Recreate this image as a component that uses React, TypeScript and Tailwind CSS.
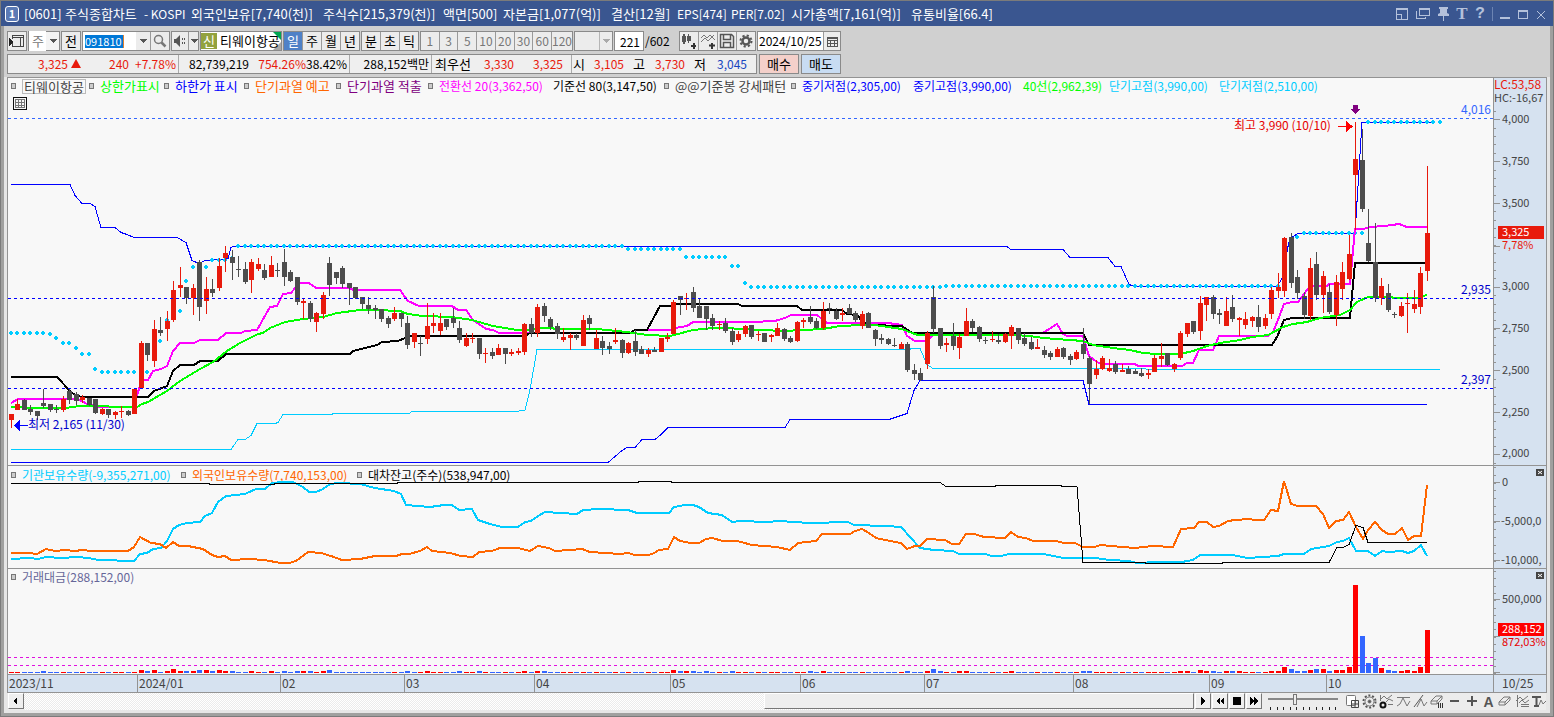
import type { ReactNode } from "react";

// one entry per trading day: direction, high, body top, body bottom, low (plot coordinates)
const CANDLES = `
r414,414,420,428 r399,404,410,410 g399,400,410,410 g405,409,412,415 g411,411,416,420 g389,403,406,408 g404,404,410,412 g405,409,410,413 r396,399,410,412 g388,391,400,404
g392,394,401,405 r395,397,400,403 g398,398,405,406 g399,399,413,414 r408,409,414,415 g409,409,415,418 r411,412,415,419 r406,411,412,418 g410,411,415,416 r389,389,414,414
r341,343,388,389 g343,343,355,361 r320,329,361,367 g317,330,333,336 r311,321,329,341 r281,290,320,322 r267,285,288,297 g287,287,298,304 r284,288,298,315 g260,262,307,321
r277,289,301,314 g279,289,293,297 r258,266,288,291 r246,253,258,272 g250,257,263,280 g256,269,270,277 g262,269,282,284 r259,262,280,293 r258,264,269,271 g264,270,278,280
r256,265,277,277 g263,270,271,277 g249,262,277,286 g270,272,281,282 g277,277,302,305 r299,301,303,319 g301,303,319,322 r312,313,322,332 r292,295,314,319 g257,263,285,296
g272,272,278,284 g266,268,284,288 g283,283,288,305 g287,287,298,299 g297,297,304,309 g297,305,309,314 g305,308,310,319 g309,309,319,322 g316,318,324,328 r307,313,319,321
g313,313,319,327 g316,323,345,349 r333,333,342,348 g336,343,344,356 r303,326,339,344 r313,323,326,333 r313,323,331,335 g319,319,327,330 g308,318,323,328 g321,328,340,343
r333,338,346,347 r333,338,339,343 g338,338,354,359 r348,353,354,363 g348,352,356,359 r344,348,355,355 g348,348,354,364 r349,352,354,356 r348,351,353,355 r323,324,352,355
g318,324,333,337 r304,307,333,337 g303,306,316,322 g317,319,327,330 g323,326,334,339 r328,337,340,342 r333,335,338,350 g333,335,338,340 r315,320,346,346 g315,318,324,330
r330,338,349,349 g336,341,348,355 g342,346,349,354 r328,340,342,344 g339,340,353,358 r342,343,353,354 g330,341,352,356 g346,349,354,354 r348,350,354,357 g347,350,352,352
r338,338,352,352 r333,337,339,342 r300,302,334,334 g296,296,300,315 r293,298,299,310 g287,292,308,312 g298,306,318,318 g306,306,319,330 g314,318,326,330 r321,324,325,330
g318,323,331,333 g328,331,342,345 r331,334,340,342 r325,326,334,337 g325,325,337,339 r331,334,335,341 g333,333,342,342 r334,335,337,342 r323,328,336,336 g328,329,339,341
g336,338,342,343 r321,322,341,342 r318,320,322,328 g306,317,322,324 g318,321,328,329 r302,311,328,330 g303,308,309,314 g308,311,319,320 r308,313,315,321 g304,308,314,314
g311,313,320,322 r311,314,326,329 g312,313,328,328 g329,330,339,346 g334,338,340,344 g338,339,344,345 g338,345,346,347 r342,344,349,349 g342,344,370,372 g364,370,374,380
g368,373,380,381 r331,333,364,369 g286,297,329,333 g328,328,346,349 r338,343,345,352 g323,336,346,350 r334,337,348,359 r308,321,336,336 g319,321,328,332 g326,327,339,342
g337,340,341,344 r331,339,340,342 g334,340,342,344 r333,334,342,343 r325,327,336,349 g328,328,340,344 g333,338,344,346 g337,342,349,350 r339,347,349,349 g346,350,355,358
g351,353,357,360 r347,349,357,357 g347,348,357,359 g354,356,360,365 r350,352,359,360 g328,344,354,359 g356,358,384,404 r360,369,375,379 r356,358,369,370 r359,368,371,372
g361,364,372,374 r364,370,372,372 g366,369,374,374 g369,371,374,374 g368,373,376,377 r369,373,375,379 r355,358,372,372 r343,356,359,367 g353,353,365,366 r363,364,369,372
r331,333,358,360 r323,323,334,337 g321,321,332,334 r296,303,331,340 r297,297,305,321 g295,297,314,319 g309,313,315,324 r297,311,326,326 g295,307,319,322 r317,318,320,336
r312,319,325,329 r316,317,321,327 g305,317,327,332 r314,318,326,329 r287,290,314,319 r273,287,291,298 r237,238,291,297 g233,237,283,288 g270,277,293,299 g292,296,315,319
r258,268,316,320 g252,264,295,300 r271,276,295,313 g284,292,312,314 r275,282,315,326 r262,272,289,300 r235,254,279,280 r122,159,175,230 g129,160,209,212 g209,243,261,262
g223,262,298,302 r278,286,298,305 g284,293,310,312 g312,314,315,318 r302,306,316,317 r293,303,304,333 r290,304,309,313 r267,273,307,314 r166,233,271,281
`.trim().split(/\s+/).map((s) => ({ up: s[0] === "r", v: s.slice(1).split(",").map(Number) }));

// trading value bars: colour and height
const VOLUMES = (
  "r r b b b b2 b b r b b r b b r b r r b r r3 b2 r3 b r2 r4 r2 b2 r2 b3 r3 b2 r3 r2 b2 b b r2 r b " +
  "r2 b b2 b b2 r2 b2 r r2 b3 b b b b b b b b b r b b2 b r r2 r r b b b2 r r b2 r b b r b r r2 " +
  "b r2 b2 b b r r b r b r b b r b r b b r b r r r3 b2 r2 b2 b b2 b r b b2 r r b r b r r b " +
  "b r r b2 b r2 b b r b b r b b b b b r b2 b b r2 b4 b2 r b r2 r2 b b b r b r r2 b b b r b " +
  "b r b b r b2 b2 r r r b r b r b r r r b r r2 r2 b r3 r2 b2 b r2 b2 r2 r r b r r2 r2 r6 b4 b2 b2 " +
  "r3 b4 r4 b2 r3 r3 r6 r88 b37 b10 b15 r5 b3 b2 r2 r3 r2 r6 r43"
).split(" ").map((s) => ({ up: s[0] === "r", h: Number(s.slice(1) || 1) }));

// short-term high dots as [first day, last day, y]
const DOTS = [
  [0, 5, 333], [6, 6, 334], [7, 7, 338], [8, 9, 343], [10, 10, 348], [11, 12, 354], [13, 13, 369], [14, 21, 372],
  [23, 23, 341], [24, 24, 320], [26, 26, 311], [27, 27, 281], [28, 28, 267], [30, 30, 267], [31, 33, 260], [34, 34, 258],
  [35, 94, 246], [95, 103, 249], [104, 110, 257], [111, 112, 266], [113, 113, 283], [114, 143, 287], [144, 195, 286],
  [198, 198, 237], [199, 208, 233], [209, 220, 122],
];

const LINES = {
  midHigh:
    "11,184 70,184 75,195 82,203 90,203 95,206 101,227 115,227 121,232 127,234 134,237 177,237 186,242 192,260 199,263 205,260 222,259 228,258 231,247 233,246 1007,246 1011,249 1063,249 1070,257 1108,257 1115,266 1121,266 1129,284 1135,286 1277,286 1282,278 1288,246 1290,238 1298,233 1355,233 1362,122 1434,122",
  midLow:
    "11,462 608,462 622,450 627,447 635,447 642,439 655,439 661,434 668,427 785,427 790,419 889,419 907,413 914,390 920,380 1083,380 1089,404 1427,404",
  shortLow:
    "11,449 231,449 238,439 245,439 251,435 257,423 275,423 278,422 283,414 332,414 333,413 409,413 412,411 513,411 525,410 530,389 537,349 910,349 911,348 920,348 927,364 933,368 1145,368 1147,369 1440,369",
  conversion:
    "11,403 18,399 78,399 87,404 100,407 133,407 138,392 142,380 148,380 153,371 161,369 167,366 173,351 180,343 194,343 200,340 218,340 226,333 241,333 245,331 257,330 270,307 277,306 283,294 291,293 299,283 309,283 316,288 350,288 353,290 400,290 408,301 419,306 452,306 458,310 466,310 473,320 486,329 493,330 499,333 630,333 635,330 670,330 675,328 687,326 693,322 752,322 775,321 785,318 791,315 817,315 827,323 888,323 895,324 902,325 907,336 915,341 927,341 932,336 934,333 1042,333 1046,331 1057,324 1063,334 1067,336 1083,336 1089,356 1097,362 1102,364 1135,364 1138,366 1182,366 1187,363 1193,363 1199,350 1213,350 1219,336 1268,336 1273,332 1278,320 1284,304 1292,302 1298,302 1304,294 1310,286 1327,286 1329,284 1350,284 1355,229 1363,229 1370,227 1385,226 1399,224 1407,227 1427,227",
  base:
    "11,377 57,377 70,391 75,395 82,397 148,397 154,391 167,386 173,371 180,365 194,365 200,361 218,361 226,354 350,354 353,351 377,345 382,342 398,341 405,338 410,336 525,336 530,333 630,333 635,330 647,330 660,306 670,306 675,304 738,304 742,306 797,306 802,310 842,310 847,314 857,315 862,321 870,325 902,326 912,333 1083,333 1089,345 1272,345 1277,337 1284,320 1292,318 1350,318 1355,263 1427,263",
  ma40:
    "11,407 37,408 65,408 80,406 137,407 142,404 148,402 167,391 180,381 200,369 213,362 227,351 240,343 258,334 263,333 270,328 285,322 303,319 323,317 337,313 360,310 375,310 400,311 408,314 423,316 452,317 472,320 493,326 517,330 527,330 538,328 550,328 557,329 597,329 607,330 627,332 647,335 670,336 678,334 693,330 713,328 725,328 743,329 783,331 803,330 823,329 840,326 863,325 875,325 888,327 902,329 912,333 918,335 960,335 1013,335 1030,336 1043,338 1083,341 1093,345 1113,348 1130,350 1143,353 1157,354 1180,354 1193,351 1207,346 1220,343 1240,340 1252,337 1268,335 1283,327 1293,324 1307,322 1320,318 1340,315 1350,310 1357,302 1368,297 1388,297 1397,298 1418,298 1423,296 1427,295",
  lending:
    "11,483 209,483 210,484 274,484 275,483 397,483 398,482 638,482 639,481 671,481 672,482 940,482 946,486 995,486 996,485 1061,485 1062,486 1077,486 1083,562 1145,562 1146,563 1222,563 1223,562 1329,562 1337,547 1343,547 1349,544 1356,525 1363,527 1368,542 1427,542",
  institution:
    "11,559 29,558 38,559 46,557 61,558 77,557 88,558 99,560 134,561 140,554 147,553 153,549 161,548 167,541 173,529 179,525 187,523 200,522 205,516 212,513 218,502 226,496 245,494 256,489 265,489 272,483 283,482 293,482 303,487 309,492 316,492 323,489 330,484 339,483 360,484 375,488 394,491 401,494 406,505 430,507 444,505 452,505 459,510 472,509 478,520 490,524 502,527 518,527 525,522 531,521 538,516 545,512 577,514 583,510 599,509 628,510 637,513 669,513 674,507 685,505 693,505 699,507 708,513 722,515 732,522 741,521 767,522 779,521 810,523 848,522 854,525 886,526 901,527 911,538 920,548 934,550 953,551 959,554 986,554 991,556 1001,556 1009,554 1043,554 1064,558 1095,558 1110,560 1129,561 1137,563 1144,563 1150,562 1182,562 1187,561 1193,560 1200,555 1233,555 1237,556 1248,558 1278,556 1284,554 1304,554 1311,549 1329,546 1337,542 1343,541 1349,538 1356,551 1368,551 1375,556 1382,551 1388,552 1402,551 1408,553 1414,551 1421,545 1427,556",
  foreign:
    "11,553 29,553 37,554 46,549 55,551 65,550 75,551 82,550 92,551 128,551 134,547 140,537 151,543 160,544 166,548 173,542 179,546 188,546 203,549 212,555 218,557 225,556 231,560 249,559 264,560 281,563 289,563 296,561 308,552 321,553 331,556 342,560 360,559 375,556 396,556 402,554 409,554 420,551 427,547 432,551 450,553 461,556 473,557 479,552 492,551 500,548 518,548 530,551 538,546 549,548 555,551 570,550 582,549 590,552 620,554 628,553 635,555 649,555 654,553 659,550 668,549 674,537 680,541 691,543 699,543 706,539 712,538 723,541 737,541 752,545 777,547 790,550 798,543 816,541 822,534 850,534 855,531 862,529 869,533 876,538 890,541 901,543 907,549 915,546 920,546 927,539 945,540 952,544 959,544 966,534 974,534 984,537 1005,538 1011,532 1018,537 1026,538 1033,541 1056,541 1064,543 1075,543 1083,547 1095,547 1100,545 1123,547 1135,548 1153,546 1173,547 1181,529 1194,528 1199,522 1207,522 1213,527 1219,526 1228,521 1235,520 1249,519 1255,520 1264,520 1271,510 1278,511 1284,481 1291,504 1298,506 1316,506 1323,514 1329,528 1336,521 1343,520 1349,512 1356,527 1363,539 1368,530 1375,522 1382,530 1388,534 1395,534 1402,528 1408,540 1414,536 1421,536 1427,485",
};

const dayX = (i: number) => Math.round(11 + i * 6.495);

function Line({ points, color, width = 1 }: { points: string; color: string; width?: number }) {
  return <polyline points={points} fill="none" stroke={color} strokeWidth={width} transform={width % 2 ? "translate(0 0.5)" : undefined} />;
}

type LabelProps = { x: number; y: number; color: string; size?: number; children: ReactNode };

function Label({ x, y, color, size = 12, children }: LabelProps) {
  return <text x={x} y={y} fill={color} fontSize={size}>{children}</text>;
}

const TITLE = [
  ["[0601]", "w-[41px]"],
  ["주식종합차트", "w-[79px]"],
  ["- KOSPI", "w-[47px] text-xs"],
  ["외국인보유[7,740(천)]", "w-[132px]"],
  ["주식수[215,379(천)]", "w-[120px]"],
  ["액면[500]", "w-[60px]"],
  ["자본금[1,077(억)]", "w-[108px]"],
  ["결산[12월]", "w-[66px]"],
  ["EPS[474]", "w-[54px] text-xs"],
  ["PER[7.02]", "w-[60px] text-xs"],
  ["시가총액[7,161(억)]", "w-[120px]"],
  ["유통비율[66.4]", "w-[90px]"],
];

function TitleBar() {
  return (
    <header className="flex h-[25px] items-center bg-[#3a5690] pl-1 text-white">
      <span className="mr-[5px] flex h-4 w-[14px] items-center justify-center rounded-[3px] border border-white bg-[#5b7ab5] text-[11px] font-bold">1</span>
      <h1 className="flex min-w-0 flex-1 items-center overflow-hidden whitespace-nowrap">
        {TITLE.map(([text, style]) => (
          <span key={text} className={`shrink-0 ${style}`}>{text}</span>
        ))}
      </h1>
      <div className="flex items-center gap-[6px] pr-[6px] text-[#b4c1db]">
        <button aria-label="크기 고정">
          <svg width="14" height="14" fill="none" stroke="currentColor" shapeRendering="crispEdges"><path d="M1.5 1.5h11v11h-11zM1.5 7.5h5v5" /><path d="M1 2h12" /></svg>
        </button>
        <button aria-label="새 창">
          <svg width="16" height="14" fill="none" stroke="currentColor" shapeRendering="crispEdges"><path d="M4.5 1.5h10v7h-10zM4 2.5h11M1.5 4v7.500h9V10" /></svg>
        </button>
        <button aria-label="고정">
          <svg width="13" height="15" fill="currentColor"><path d="M2 1h9v2h-1v4l2 1v2H7v5H6v-5H1V8l2-1V3H2z" /></svg>
        </button>
        <button aria-label="글꼴" className="w-3 font-['Liberation_Serif',serif] text-[17px] leading-4 font-bold">T</button>
        <button aria-label="도움말" className="w-3 font-['Liberation_Mono',monospace] text-[16px] leading-4 font-bold">?</button>
        <span className="h-[14px] w-px bg-[#6c84b3]" />
        <button aria-label="최소화">
          <svg width="12" height="14" fill="currentColor" shapeRendering="crispEdges"><path d="M1 10h10v2H1z" /></svg>
        </button>
        <button aria-label="최대화">
          <svg width="12" height="14" fill="none" stroke="currentColor" shapeRendering="crispEdges"><path d="M1.5 3.5h9v8h-9z" /><path d="M1 4h10" strokeWidth="2" /></svg>
        </button>
        <button aria-label="닫기">
          <svg width="12" height="14" fill="none" stroke="currentColor"><path d="M2 4l8 8M10 4l-8 8" /></svg>
        </button>
      </div>
    </header>
  );
}

const box = "flex h-[20px] shrink-0 border border-[#8a8a8a] bg-[#ececec]";
const cell = "flex items-center justify-center border-l border-[#9a9a9a] first:border-l-0";

function Arrow({ color = "#555" }: { color?: string }) {
  return <svg width="8" height="4" fill={color} shapeRendering="crispEdges"><path d="M0 0h8L4 4z" /></svg>;
}

function Toolbar() {
  return (
    <div className="flex h-[25px] items-start gap-px overflow-hidden pt-[5px] pl-[3px] whitespace-nowrap">
      <button className={`${box} w-[20px] items-center justify-center`} aria-label="패널">
        <svg width="16" height="14" fill="none" stroke="#444" shapeRendering="crispEdges"><path d="M3.5 5V1.5h11v11h-11V9M3 3h12M11.5 3v9" /><path d="M0 4l5 4-5 4z" fill="#222" stroke="none" /></svg>
      </button>
      <label className={`${box} w-[32px] items-center bg-[#f4f4f4]`}>
        <select aria-label="종목 구분" className="w-[17px] appearance-none bg-white pl-[3px] text-[#777]"><option>주</option></select>
        <span className="flex flex-1 justify-center"><Arrow /></span>
      </label>
      <button className={`${box} w-[20px] items-center justify-center`}>전</button>
      <div className={`${box} w-[88px] items-center bg-white`}>
        <input aria-label="종목코드" defaultValue="091810" className="ml-0.5 h-[13px] w-[39px] border-r border-[#e08030] bg-[#0078d7] text-[11px] leading-[13px] text-white outline-none" />
        <span className="flex-1" />
        <button aria-label="종목 목록" className="flex h-full w-[14px] items-center justify-center bg-[#ececec]"><Arrow /></button>
        <button aria-label="검색" className="flex h-full w-[19px] items-center justify-center border-l border-[#9a9a9a] bg-[#ececec]">
          <svg width="14" height="14" fill="none" stroke="#777"><circle cx="5.5" cy="5.5" r="4" strokeWidth="1.5" /><path d="M8.5 8.5l4 4" strokeWidth="2.5" /></svg>
        </button>
      </div>
      <div className={`${box} w-[28px]`}>
        <button className={`${cell} flex-1`} aria-label="음성">
          <svg width="14" height="12" fill="#555"><path d="M1 4h2l4-4v12L3 8H1zM9 3h1v2H9zM9 7h1v2H9zM11 3h1v2h-1zM11 7h1v2h-1z" /></svg>
        </button>
        <button className={`${cell} w-[10px]`} aria-label="음성 설정"><Arrow /></button>
      </div>
      <div className={`${box} relative w-[82px] items-center bg-white`}>
        <svg className="absolute top-0 right-0" width="8" height="18"><path d="M0 0h8v8z" fill="#00a651" /><path d="M8 10v8H0z" fill="#aaa" /></svg>
        <span className="mr-[3px] h-4 w-4 bg-[#93a23e] text-center leading-4 text-white">신</span>
        <span className="relative">티웨이항공</span>
      </div>
      <div className={`${box} w-[77px]`}>
        <button className={`${cell} flex-1 bg-[#4f81c7] text-white`}>일</button>
        <button className={`${cell} flex-1`}>주</button>
        <button className={`${cell} flex-1`}>월</button>
        <button className={`${cell} flex-1`}>년</button>
      </div>
      <div className={`${box} w-[58px]`}>
        <button className={`${cell} flex-1`}>분</button>
        <button className={`${cell} flex-1`}>초</button>
        <button className={`${cell} flex-1`}>틱</button>
      </div>
      <div className={`${box} w-[153px] text-xs text-[#777]`}>
        {["1", "3", "5", "10", "20", "30", "60", "120"].map((n) => (
          <button key={n} className={`${cell} flex-1 basis-0`}>{n}</button>
        ))}
      </div>
      <label className={`${box} w-[39px] items-center`}>
        <select aria-label="분 간격" disabled className="w-[24px] appearance-none"><option></option></select>
        <span className="flex h-full flex-1 items-center justify-center border-l border-[#b5b5b5]"><Arrow color="#aaa" /></span>
      </label>
      <input aria-label="표시 개수" defaultValue="221" className="h-[20px] w-[30px] shrink-0 border border-[#8a8a8a] bg-white pr-[3px] text-right text-xs outline-none" />
      <span className="w-[33px] shrink-0 text-xs leading-[20px]">/602</span>
      <div className={`${box} w-[77px]`}>
        <button className={`${cell} flex-1`} aria-label="봉 추가">
          <svg width="16" height="16" fill="#555" shapeRendering="crispEdges"><path d="M1 3h4v6H1zM2 1h2v10H2zM6 3h4v5H6zM7 1h1v9H7z" /><path d="M10 12h5v2h-5zM12 10h2v6h-2z" fill="#333" /></svg>
        </button>
        <button className={`${cell} flex-1`} aria-label="지표 추가">
          <svg width="16" height="16" fill="none" stroke="#777"><path d="M1 5l3-3 3 3 3-3 5 5M1 9l4-4 3 3 3-3 3-3" /><path d="M9 12.5h6M12 10v6" stroke="#333" strokeWidth="2" /></svg>
        </button>
        <button className={`${cell} flex-1`} aria-label="저장">
          <svg width="16" height="16" fill="none" stroke="#555" strokeWidth="1.5"><path d="M1.5 1.5h11l2 2v11h-13zM4.5 1.5v5h7v-5M4.5 14.5v-5h7v5" /></svg>
        </button>
        <button className={`${cell} flex-1`} aria-label="설정">
          <svg width="14" height="14" fill="none" stroke="#555"><circle cx="7" cy="7" r="3.5" strokeWidth="2.5" /><circle cx="7" cy="7" r="5.5" strokeWidth="2" strokeDasharray="2.2 2.12" /></svg>
        </button>
      </div>
      <div className={`${box} w-[84px] bg-white`}>
        <input aria-label="기준일" defaultValue="2024/10/25" className="w-[65px] pl-px text-xs outline-none" />
        <button className={`${cell} flex-1 bg-[#ececec]`} aria-label="달력">
          <svg width="11" height="11" fill="none" stroke="#555" shapeRendering="crispEdges"><path d="M.5 1.5h10v9H.5zM0 2.5h11M0 4.5h11M3.5 5v6M7.5 5v6M0 7.5h11" /></svg>
        </button>
      </div>
    </div>
  );
}

function QuoteRow() {
  return (
    <div className="flex h-[26px] items-start gap-0.5 overflow-hidden pt-[3px] pl-[3px] leading-[18px] whitespace-nowrap">
      <div className="flex h-[20px] w-[750px] shrink-0 border border-[#8a8a8a] bg-[#efefef] text-xs leading-[18px] text-[#e81a0c]">
        <span className="w-[60px] text-right">3,325</span>
        <svg className="mt-1 ml-[3px]" width="10" height="9" fill="#e81a0c"><path d="M5 0l5 9H0z" /></svg>
        <span className="w-[48px] text-right">240</span>
        <span className="w-[50px] border-r border-[#aaa] pr-0.5 text-right">+7.78%</span>
        <span className="w-[70px] text-right text-black">82,739,219</span>
        <span className="w-[57px] text-right">754.26%</span>
        <span className="w-[44px] border-r border-[#aaa] pr-0.5 text-right text-black">38.42%</span>
        <span className="w-[82px] border-r border-[#aaa] pr-0.5 text-right text-black">288,152백만</span>
        <span className="w-[38px] pl-[3px] text-[13px] text-black">최우선</span>
        <span className="w-[44px] text-right">3,330</span>
        <span className="w-[58px] border-r border-[#aaa] pr-2 text-right">3,325</span>
        <span className="w-[13px] pl-px text-[13px] text-black">시</span>
        <span className="w-[39px] text-right">3,105</span>
        <span className="w-[21px] text-right text-[13px] text-black">고</span>
        <span className="w-[40px] text-right">3,730</span>
        <span className="w-[21px] text-right text-[13px] text-black">저</span>
        <span className="w-[41px] text-right text-[#1746c0]">3,045</span>
      </div>
      <button className="h-[20px] w-[40px] shrink-0 border border-[#8a8a8a] bg-[#f4d0ca]">매수</button>
      <button className="h-[20px] w-[40px] shrink-0 border border-[#8a8a8a] bg-[#c8dcf2]">매도</button>
    </div>
  );
}

function Marker() {
  return <span className="mr-[6px] h-[6px] w-[5px] shrink-0 border border-[#777] bg-[#ccc]" />;
}

const LEGEND = [
  { text: "상한가표시", style: "w-[75px] text-[#00ff00]", marker: true },
  { text: "하한가 표시", style: "w-[80px] text-[#0000ff]", marker: true },
  { text: "단기과열 예고", style: "w-[92px] text-[#ff6600]", marker: true },
  { text: "단기과열 적출", style: "w-[92px] text-[#800080]", marker: true },
  { text: "전환선 20(3,362,50)", style: "w-[125px] text-xs text-[#ff00ff]", marker: true },
  { text: "기준선 80(3,147,50)", style: "w-[111px] text-xs text-black", marker: false },
  { text: "@@기준봉 강세패턴", style: "w-[127px] text-[#444]", marker: true },
  { text: "중기저점(2,305,00)", style: "w-[122px] text-xs text-[#0000ff]", marker: true },
  { text: "중기고점(3,990,00)", style: "w-[110px] text-xs text-[#0000ff]", marker: false },
  { text: "40선(2,962,39)", style: "w-[86px] text-xs text-[#00ff00]", marker: false },
  { text: "단기고점(3,990,00)", style: "w-[110px] text-xs text-[#00ccff]", marker: false },
  { text: "단기저점(2,510,00)", style: "w-[110px] text-xs text-[#00ccff]", marker: false },
];

function PricePane() {
  return (
    <section className="flex border-b border-[#939393]">
      <div className="min-w-0 flex-1">
        <div className="flex h-[19px] items-center overflow-hidden pb-[3px] pl-[3px] whitespace-nowrap">
          <Marker />
          <button className="mr-[3px] h-[15px] w-[64px] shrink-0 border border-[#bbb] leading-[13px] text-[#444]">티웨이항공</button>
          {LEGEND.map(({ text, style, marker }) => (
            <span key={text} className={`flex h-4 shrink-0 items-center ${style}`}>
              {marker && <Marker />}
              {text}
            </span>
          ))}
        </div>
        <svg className="block w-full" viewBox="8 97 1485 368" shapeRendering="crispEdges">
          <g fill="none" stroke="#777">
            <path d="M13.5 97.5h13v12h-13z" stroke="#111" />
            <path d="M15.5 99.5h9v8h-9zM15 102.5h10M15 105.5h10M18.5 99v9M21.5 99v9" />
          </g>
          <Line points={LINES.midHigh} color="#0000ff" />
          <Line points={LINES.midLow} color="#0000ff" />
          <Line points={LINES.shortLow} color="#00ccff" />
          <g fill="#00ccff">
            {DOTS.flatMap(([from, to, y]) =>
              Array.from({ length: to - from + 1 }, (_, k) => (
                <path key={from + k} d={`M${dayX(from + k) - 2} ${y - 1}h1v-1h2v1h1v2h-1v1h-2v-1h-1z`} />
              ))
            )}
          </g>
          <Line points={LINES.conversion} color="#ff00ff" width={2} />
          <Line points={LINES.base} color="#000000" width={2} />
          <Line points={LINES.ma40} color="#00ff00" width={2} />
          {CANDLES.map(({ up, v: [high, top, bottom, low] }, i) => (
            <g key={i} fill={up ? "#e81a0c" : "#4d4d4d"}>
              <rect x={dayX(i)} y={high} width="1" height={low - high} />
              <rect x={dayX(i) - 2} y={top} width="5" height={bottom - top} />
            </g>
          ))}
          <g strokeDasharray="3 3">
            <path d="M8 118.5h1485" stroke="#3366ff" />
            <path d="M8 298.5h1485M8 388.5h1485" stroke="#0000ff" />
          </g>
          <path d="M1353 105h5v4h3l-5.5 5-5.5-5h3z" fill="#800080" />
          <path d="M1338 126h8v-5l7 5.5-7 5.5v-5h-8z" fill="#ff0000" />
          <path d="M28 425h-8v-5l-6 5.5 6 5.5v-5h8z" fill="#0000ff" />
          <Label x={1234} y={130} color="#e60000">최고 3,990 (10/10)</Label>
          <Label x={28} y={429} color="#0000cc">최저 2,165 (11/30)</Label>
          <Label x={1461} y={114} color="#3366ff">4,016</Label>
          <Label x={1461} y={294} color="#0000cc">2,935</Label>
          <Label x={1461} y={384} color="#0000cc">2,397</Label>
        </svg>
      </div>
      <Axis top={78} height={387} ticks={[119, 161, 203, 246, 287, 328, 370, 412, 454]} step={8.37} start={111}>
        <Label x={1494} y={89} color="#e81a0c">LC:53,58</Label>
        <Label x={1494} y={102} color="#444" size={11}>HC:-16,67</Label>
        {["4,000", "3,750", "3,500", "", "3,000", "2,750", "2,500", "2,250", "2,000"].map((t, i) => (
          <Label key={i} x={1502} y={Math.round(123 + i * 41.8)} color="#444" size={11}>{t}</Label>
        ))}
        <rect x="1498" y="226" width="46" height="13" fill="#e81a0c" />
        <Label x={1502} y={236} color="#fff" size={11}>3,325</Label>
        <Label x={1502} y={249} color="#e81a0c" size={11}>7,78%</Label>
      </Axis>
    </section>
  );
}

type AxisProps = { top: number; height: number; ticks: number[]; step: number; start: number; children: ReactNode };

function Axis({ top, height, ticks, step, start, children }: AxisProps) {
  const minor = Array.from({ length: Math.floor((top + height - start) / step) + 1 }, (_, k) => Math.round(start + k * step));
  return (
    <div className="w-[53px] shrink-0 border-l border-[#939393] bg-[#d6e2f0]">
      <svg className="block h-full w-full" viewBox={`1494 ${top} 52 ${height}`} preserveAspectRatio="none">
        <g fill="#939393" shapeRendering="crispEdges">
          {minor.map((y) => <rect key={y} x="1494" y={y} width="2" height="1" />)}
          {ticks.map((y) => <rect key={y} x="1494" y={y} width="6" height="1" />)}
        </g>
        {children}
      </svg>
    </div>
  );
}

function CloseMark({ y }: { y: number }) {
  return (
    <g>
      <rect x="1536" y={y} width="8" height="7" fill="#444" />
      <path d={`M1538 ${y + 2}l4 3M1542 ${y + 2}l-4 3`} stroke="#fff" />
    </g>
  );
}

function HoldingsPane() {
  return (
    <section className="flex border-b border-[#939393]">
      <div className="min-w-0 flex-1">
        <div className="flex h-[14px] items-center pt-[3px] pl-[3px] text-xs whitespace-nowrap">
          <span className="flex w-[170px] shrink-0 items-center text-[#00ccff]"><Marker />기관보유수량(-9,355,271,00)</span>
          <span className="flex w-[176px] shrink-0 items-center text-[#ff6600]"><Marker />외국인보유수량(7,740,153,00)</span>
          <span className="flex shrink-0 items-center text-black"><Marker />대차잔고(주수)(538,947,00)</span>
        </div>
        <svg className="block w-full" viewBox="8 480 1485 88" shapeRendering="crispEdges">
          <Line points={LINES.institution} color="#00ccff" width={2} />
          <Line points={LINES.foreign} color="#ff6600" width={2} />
          <Line points={LINES.lending} color="#000000" />
        </svg>
      </div>
      <Axis top={466} height={102} ticks={[482, 521, 560]} step={7.8} start={467}>
        <Label x={1502} y={486} color="#444" size={11}>0</Label>
        <Label x={1501} y={525} color="#444" size={11}>-5,000,0</Label>
        <Label x={1501} y={564} color="#444" size={11}>-10,000,</Label>
        <CloseMark y={469} />
      </Axis>
    </section>
  );
}

function VolumePane() {
  return (
    <section className="flex border-b border-[#939393]">
      <div className="min-w-0 flex-1">
        <div className="flex h-[16px] items-center pl-[3px] text-xs text-[#666699]"><Marker />거래대금(288,152,00)</div>
        <svg className="block w-full" viewBox="8 585 1485 89" shapeRendering="crispEdges">
          <path d="M8 657.5h1485M8 665.5h1485" stroke="#e010e0" strokeDasharray="3 3" />
          {VOLUMES.map(({ up, h }, i) => (
            <rect key={i} x={dayX(i) - 2} y={673 - h} width="5" height={h} fill={up ? "#ff0000" : "#3366ff"} />
          ))}
        </svg>
      </div>
      <Axis top={569} height={105} ticks={[599, 636, 672]} step={7.3} start={571}>
        <Label x={1502} y={603} color="#444" size={11}>500,000</Label>
        <rect x="1498" y="623" width="46" height="13" fill="#ff0000" />
        <Label x={1502} y={633} color="#fff" size={11}>288,152</Label>
        <Label x={1502} y={646} color="#e60000" size={11}>872,03%</Label>
        <CloseMark y={572} />
      </Axis>
    </section>
  );
}

const MONTHS = [
  ["2023/11", "w-[130px]"],
  ["2024/01", "w-[143px]"],
  ["02", "w-[124px]"],
  ["03", "w-[130px]"],
  ["04", "w-[136px]"],
  ["05", "w-[130px]"],
  ["06", "w-[124px]"],
  ["07", "w-[149px]"],
  ["08", "w-[136px]"],
  ["09", "w-[117px]"],
];

function DateStrip() {
  return (
    <div className="flex h-[18px] border-b border-[#939393] bg-[#d6e2f0] text-xs leading-[16px] text-[#444]">
      {MONTHS.map(([text, width]) => (
        <span key={text} className={`shrink-0 border-r border-[#939393] pl-px ${width}`}>{text}</span>
      ))}
      <span className="flex-1 pl-px">10</span>
      <span className="w-[53px] shrink-0 border-l border-[#939393] pl-2">10/25</span>
    </div>
  );
}

function ScrollButton({ label, d }: { label: string; d: string }) {
  return (
    <button aria-label={label} className="flex h-4 w-4 shrink-0 items-center justify-center border border-t-white border-r-[#777] border-b-[#777] border-l-white bg-[#efefef]">
      <svg width="10" height="8" fill="#000" shapeRendering="crispEdges"><path d={d} /></svg>
    </button>
  );
}

const TOOLS: { label: string; art: ReactNode }[] = [
  { label: "분할", art: <><rect x="1.5" y="1.5" width="9" height="10" rx="1" fill="#fff" /><path d="M6.500 6.500h7v7h-7zM10 7v7M6 10h8" stroke="#444" /></> },
  { label: "환경설정", art: <><circle cx="7.5" cy="7.5" r="6" strokeWidth="2" strokeDasharray="2 1.77" stroke="#555" /><circle cx="7.5" cy="7.5" r="4.5" /><circle cx="7.5" cy="7.5" r="1.5" fill="#555" /></> },
  { label: "지표 설정", art: <><path d="M1.5 1v6M1 6l4-4 3 3 5-4M7 8l3-3 4 2M9 10.5h5" /><circle cx="4" cy="11" r="2.5" strokeWidth="2" stroke="#111" /></> },
  { label: "추세선", art: <path d="M1 3.5h13M1 12l3-2 3-6 4 8 3-5" /> },
  { label: "사선", art: <><path d="M1 13L10 1" stroke="#555" /><path d="M4 13l4-8 3 7 3-4" /></> },
  { label: "전체 지우기", art: <><path d="M1 7l5-5h6l-5 5zM1 7v3h6V7M7 10l5-5V2" /><path d="M8.5 9v5M10.5 9v5M12.5 9v5" stroke="#333" /></> },
  { label: "축소", art: <path d="M3 7h9" strokeWidth="2" stroke="#555" /> },
  { label: "확대", art: <path d="M3 7h10M8 2v10" strokeWidth="2" stroke="#555" /> },
];

const TOOLS_RIGHT: { label: string; art: ReactNode }[] = [
  { label: "지우개", art: <path d="M1 8l5-5h6l-5 5zM1 8v3h6V8M7 11l5-5V3" /> },
  { label: "지표 보기", art: <path d="M2.5 1v12M1 7l4-4 3 3 5-4M4 9l3-3 3 3 4-3M6 10.5h8M6 12.5h8" /> },
];

function Tool({ label, art }: { label: string; art: ReactNode }) {
  return (
    <button aria-label={label} className="flex w-[17px] shrink-0 justify-center">
      <svg width="15" height="15" fill="none" stroke="#777">{art}</svg>
    </button>
  );
}

function BottomBar() {
  return (
    <footer className="flex h-[17px] overflow-hidden bg-[#ececec]">
      <ScrollButton label="왼쪽" d="M6 0v8L2 4z" />
      <div className="flex min-w-0 flex-1 bg-[repeating-conic-gradient(#ffffff_0_25%,#ebebeb_0_50%)] bg-size-[2px_2px]">
        <span className="grow-[741] basis-0" />
        <span className="mb-px grow-[429] basis-0 border border-t-white border-r-[#777] border-b-[#777] border-l-white bg-[#eeeeee]" />
      </div>
      <div className="flex gap-px pl-px">
        <ScrollButton label="오른쪽" d="M3 0v8l4-4z" />
        <ScrollButton label="빠르게 뒤로" d="M5 0v8L1 4zM9 0v8L5 4z" />
        <ScrollButton label="정지" d="M1 0h8v8H1z" />
        <ScrollButton label="빠르게 앞으로" d="M1 0v8l4-4zM5 0v8l4-4z" />
      </div>
      <div className="mr-[6px] ml-[6px] w-[70px] shrink-0">
        <input
          type="range"
          aria-label="확대 비율"
          min="0"
          max="100"
          defaultValue="38"
          className="block h-[12px] w-full appearance-none bg-transparent [&::-webkit-slider-runnable-track]:h-[2px] [&::-webkit-slider-runnable-track]:bg-[#888] [&::-webkit-slider-thumb]:-mt-1 [&::-webkit-slider-thumb]:h-[11px] [&::-webkit-slider-thumb]:w-[4px] [&::-webkit-slider-thumb]:appearance-none [&::-webkit-slider-thumb]:border [&::-webkit-slider-thumb]:border-[#777] [&::-webkit-slider-thumb]:bg-[#eee]"
        />
        <svg className="block" width="70" height="5" fill="#222" shapeRendering="crispEdges">
          {Array.from({ length: 11 }, (_, i) => <rect key={i} x={Math.round(2 + i * 6.5)} y="2" width="1" height="3" />)}
        </svg>
      </div>
      <div className="flex items-center">
        {TOOLS.map((t) => <Tool key={t.label} {...t} />)}
        <button className="w-[17px] shrink-0 font-['Liberation_Sans',sans-serif] text-[14px] leading-4 font-bold text-[#555]">A</button>
        {TOOLS_RIGHT.map((t) => <Tool key={t.label} {...t} />)}
        <button aria-label="글자 추가" className="flex w-[15px] shrink-0 items-center">
          <svg width="15" height="15" fill="none" stroke="#777"><path d="M1 3h9M5.5 3v9M3 12h5" stroke="#555" strokeWidth="2" /><path d="M8 11l2-5 2 4 3-3" /></svg>
        </button>
      </div>
    </footer>
  );
}

export default function App() {
  return (
    <div className="flex min-h-screen flex-col border border-[#7b7b7b] bg-[#a0a09f] font-['Noto_Sans_CJK_KR',sans-serif] text-[13px] text-black">
      <TitleBar />
      <div className="mx-[3px] mb-[3px] flex flex-1 flex-col bg-[#e6e6e6]">
        <div className="bg-[#d0d0d0]">
          <Toolbar />
          <QuoteRow />
        </div>
        <main className="mx-[3px] mb-[3px] flex flex-col">
          <div className="border border-b-0 border-[#939393] bg-[#f8f8f8]">
            <PricePane />
            <HoldingsPane />
            <VolumePane />
            <DateStrip />
          </div>
          <div className="px-px">
            <BottomBar />
          </div>
        </main>
      </div>
    </div>
  );
}
